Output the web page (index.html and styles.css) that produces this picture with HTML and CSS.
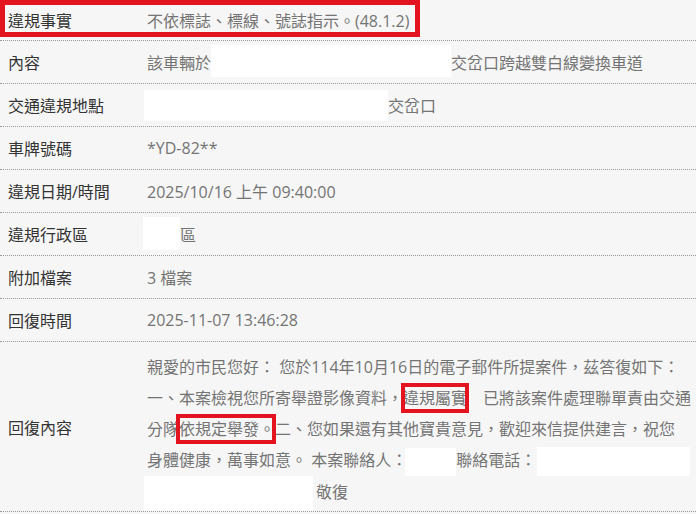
FILE: index.html
```html
<!DOCTYPE html>
<html lang="zh-Hant">
<head>
<meta charset="utf-8">
<link rel="stylesheet" href="styles.css">
</head>
<body>
<div class="sheet">
  <div class="row first">
    <div class="label">違規事實</div>
    <div class="value">不依標誌、標線、號誌指示。(48.1.2)</div>
    <div class="anno-top"></div>
  </div>
  <div class="row">
    <div class="label">內容</div>
    <div class="value">該車輛於<span class="redact r-road"></span>交岔口跨越雙白線變換車道</div>
  </div>
  <div class="row">
    <div class="label">交通違規地點</div>
    <div class="value"><span class="redact r-place"></span>交岔口</div>
  </div>
  <div class="row">
    <div class="label">車牌號碼</div>
    <div class="value">*YD-82**</div>
  </div>
  <div class="row">
    <div class="label">違規日期/時間</div>
    <div class="value">2025/10/16 上午 09:40:00</div>
  </div>
  <div class="row">
    <div class="label">違規行政區</div>
    <div class="value"><span class="redact r-dist"></span>區</div>
  </div>
  <div class="row">
    <div class="label">附加檔案</div>
    <div class="value">3 檔案</div>
  </div>
  <div class="row">
    <div class="label">回復時間</div>
    <div class="value">2025-11-07 13:46:28</div>
  </div>
  <div class="row reply">
    <div class="label">回復內容</div>
    <div class="value">
      <div class="line">親愛的市民您好： 您於114年10月16日的電子郵件所提案件，茲答復如下：</div>
      <div class="line">一、本案檢視您所寄舉證影像資料，<span class="mark m1">違規屬實</span>　已將該案件處理聯單責由交通</div>
      <div class="line">分隊<span class="mark m2">依規定舉發。</span>二、您如果還有其他寶貴意見，歡迎來信提供建言，祝您</div>
      <div class="line">身體健康，萬事如意。 本案聯絡人：<span class="redact r-name"></span>聯絡電話：<span class="redact r-phone"></span></div>
      <div class="line"><span class="redact r-sign"></span>敬復</div>
    </div>
  </div>
</div>
</body>
</html>
```
FILE: styles.css
```css
html, body {
  margin: 0;
  padding: 0;
  background: #f6f6f6;
}
body {
  font-family: "Open Sans", "Noto Sans CJK TC", sans-serif;
  font-size: 16px;
  color: #333;
}
.sheet {
  width: 696px;
}
.row {
  position: relative;
  display: grid;
  grid-template-columns: 147px 1fr;
  align-items: center;
  height: 42px;
  border-bottom: 1px dotted #9a9a9a;
  white-space: nowrap;
}
.row.first {
  height: 40px;
}
.label {
  padding-left: 8px;
  color: #333;
}
.value {
  color: #747474;
  display: flex;
  align-items: center;
}
.anno-top {
  position: absolute;
  left: 0;
  top: 0;
  width: 420px;
  height: 37px;
  box-sizing: border-box;
  border: 5px solid #e3141f;
}
.redact {
  display: inline-block;
  vertical-align: middle;
  background: #ffffff;
}
.r-road { width: 240px; height: 32px; margin-top: -2px; }
.r-place { width: 244px; height: 31px; margin-left: -3px; }
.r-dist { width: 37px; height: 33px; margin-left: -4px; margin-top: -1px; }
.row.reply {
  height: 169px;
}
.reply .value {
  display: block;
  padding-top: 6px;
}
.line {
  height: 31px;
  line-height: 31px;
}
.mark {
  position: relative;
}
.mark::after {
  content: "";
  position: absolute;
  top: -4px;
  bottom: -4px;
  border: 4px solid #e3141f;
}
.m1::after { left: -2px; right: -2px; }
.m2::after { left: -3px; right: -1px; }
.r-name { width: 51px; height: 28px; margin-left: -2px; }
.r-phone { width: 153px; height: 29px; margin-left: 1px; }
.r-sign { width: 169px; height: 35px; margin-left: -3px; margin-right: 3px; }
```
